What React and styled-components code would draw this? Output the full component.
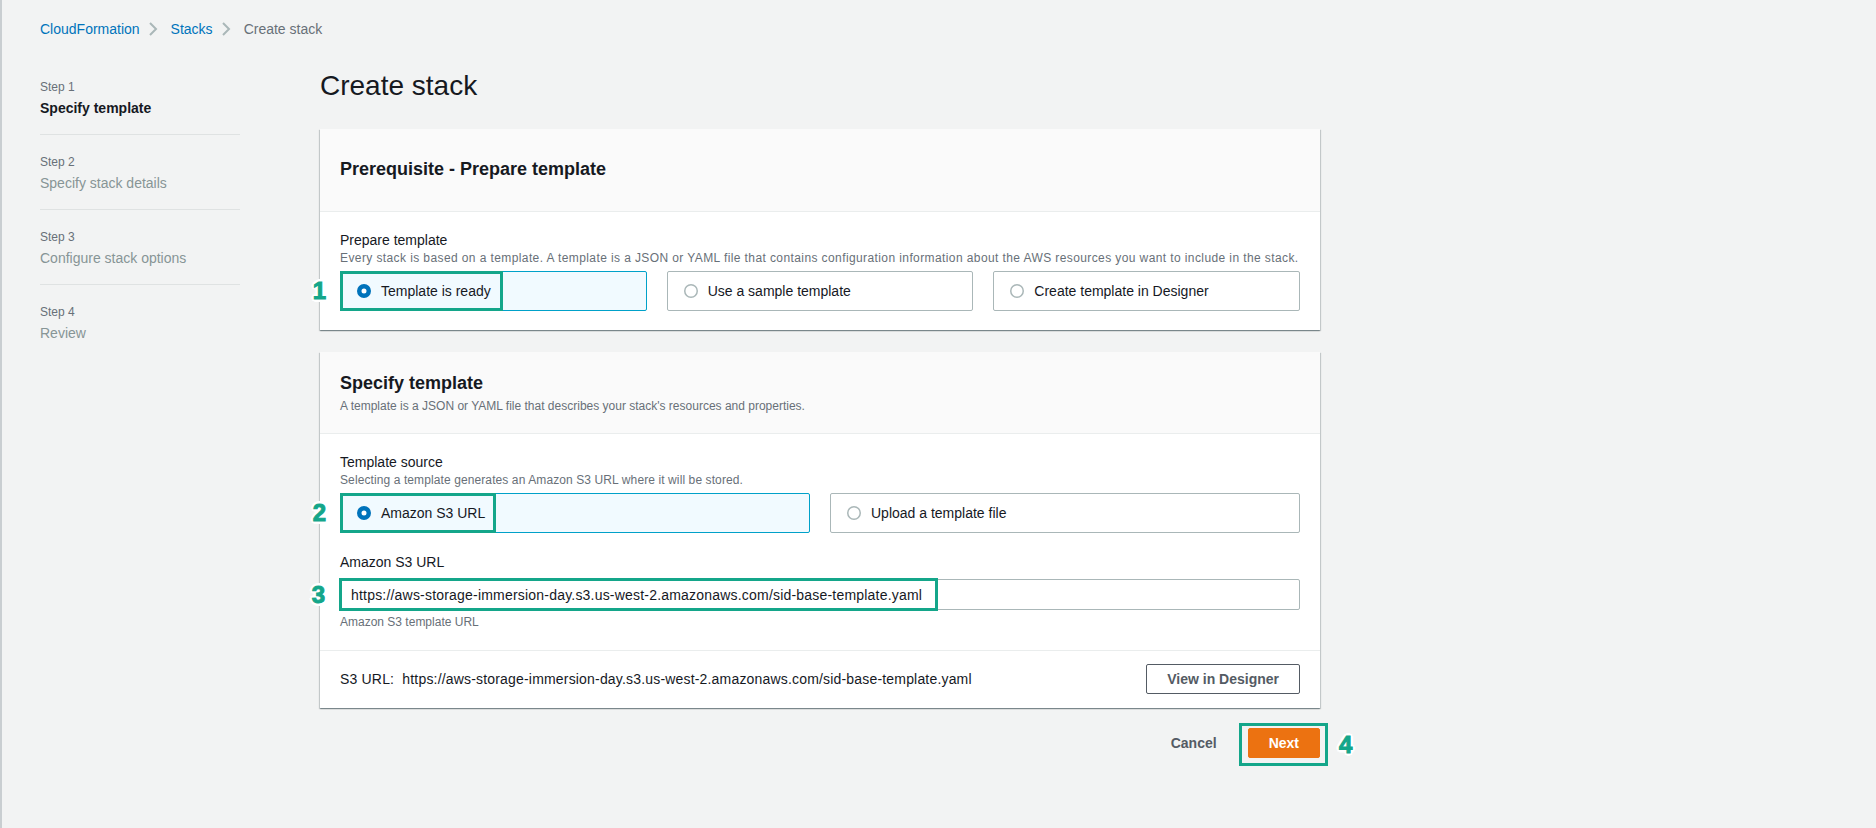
import React from 'react'
import styled, { createGlobalStyle } from 'styled-components';

const GlobalStyle = createGlobalStyle`
  html, body {
    margin: 0;
    padding: 0;
    background: #f2f3f3;
  }
  body {
    font-family: "Liberation Sans", Arial, sans-serif;
    font-size: 14px;
    line-height: 20px;
    color: #16191f;
  }
  * {
    box-sizing: border-box;
  }
`;

const Page = styled.div`
  min-height: 100vh;
  border-left: 2px solid #c9ced1;
  padding: 20px 40px 40px 38px;
`;

const Breadcrumbs = styled.nav`
  display: flex;
  align-items: center;
  height: 18px;
  line-height: 18px;
  font-size: 14px;
`;

const Crumb = styled.a`
  color: ${p => p.$current ? '#687078' : '#0073bb'};
  text-decoration: none;
`;

const Chevron = styled.svg`
  width: 16px;
  height: 16px;
  margin: 0 10px 0 5px;
`;

const Layout = styled.div`
  display: flex;
  align-items: flex-start;
  margin-top: 30px;
`;

const Steps = styled.ol`
  list-style: none;
  margin: 0 80px 0 0;
  padding: 11px 0 0;
  width: 200px;
  flex-shrink: 0;
`;

const Step = styled.li`
  padding: 19px 0 16px;
  border-bottom: 1px solid #dfe2e2;
  &:first-child { padding-top: 0; }
  &:last-child { border-bottom: none; }
`;

const StepNum = styled.div`
  font-size: 12px;
  line-height: 16px;
  color: #687078;
  margin-bottom: 3px;
`;

const StepName = styled.div`
  font-size: 14px;
  line-height: 20px;
  color: ${p => p.$active ? '#16191f' : '#879596'};
  font-weight: ${p => p.$active ? 700 : 400};
`;

const Main = styled.main`
  width: 1000px;
  flex-shrink: 0;
`;

const Title = styled.h1`
  margin: 0 0 25px;
  font-size: 28px;
  line-height: 36px;
  font-weight: 400;
  color: #16191f;
`;

const Card = styled.section`
  background: #fff;
  box-shadow: 0 1px 1px 0 rgba(0, 28, 36, 0.3), 1px 1px 1px 0 rgba(0, 28, 36, 0.15), -1px 1px 1px 0 rgba(0, 28, 36, 0.15);
  & + & { margin-top: 22px; }
`;

const CardHeader = styled.div`
  background: #fafafa;
  border-bottom: 1px solid #eaeded;
  padding: ${p => p.$tall ? '29px 20px 31px' : '20px 20px 19px'};
`;

const CardTitle = styled.h2`
  margin: 0;
  font-size: 18px;
  line-height: 22px;
  font-weight: 700;
`;

const Hint = styled.p`
  margin: ${p => p.$top || 0}px 0 0;
  font-size: 12px;
  line-height: 16px;
  color: #687078;
  letter-spacing: ${p => p.$spread || 0}px;
`;

const CardBody = styled.div`
  padding: 18px 20px ${p => p.$bottom || 19}px;
`;

const Label = styled.div`
  font-size: 14px;
  line-height: 20px;
  margin-top: ${p => p.$top || 0}px;
`;

const Tiles = styled.div`
  display: grid;
  grid-template-columns: repeat(${p => p.$cols}, 1fr);
  gap: 20px;
  margin-top: 5px;
`;

const Tile = styled.label`
  position: relative;
  display: flex;
  align-items: center;
  gap: 10px;
  height: 40px;
  padding: 0 16px;
  border: 1px solid ${p => p.$selected ? '#00a1c9' : '#aab7b8'};
  background: ${p => p.$selected ? '#f1faff' : '#fff'};
  border-radius: 2px;
  font-size: 14px;
`;

const InputWrap = styled.div`
  position: relative;
  margin-top: 7px;
`;

const Input = styled.input`
  display: block;
  width: 100%;
  height: 31px;
  padding: 0 10px;
  border: 1px solid #aab7b8;
  border-radius: 2px;
  font-family: "Liberation Sans", Arial, sans-serif;
  font-size: 14px;
  letter-spacing: 0.2px;
  color: #16191f;
  background: #fff;
  outline: none;
`;

const Footer = styled.div`
  display: flex;
  align-items: center;
  justify-content: space-between;
  border-top: 1px solid #eaeded;
  padding: 13px 20px 14px;
`;

const UrlText = styled.span`
  letter-spacing: 0.18px;
`;

const Button = styled.button`
  height: 30px;
  padding: 0 20px;
  border-radius: 2px;
  border: 1px solid ${p => p.$primary ? '#ec7211' : '#545b64'};
  background: ${p => p.$primary ? '#ec7211' : '#fff'};
  color: ${p => p.$primary ? '#fff' : '#545b64'};
  font-family: "Liberation Sans", Arial, sans-serif;
  font-size: 14px;
  font-weight: 700;
  cursor: pointer;
`;

const LinkButton = styled(Button)`
  border-color: transparent;
  background: transparent;
`;

const Actions = styled.div`
  display: flex;
  justify-content: flex-end;
  align-items: center;
  gap: 10px;
  margin-top: 20px;
`;

const Anchor = styled.span`
  position: relative;
  display: inline-flex;
`;

const Highlight = styled.span`
  position: absolute;
  top: ${p => p.$top ?? -1}px;
  bottom: ${p => p.$bottom ?? -1}px;
  left: ${p => p.$left ?? -1}px;
  ${p => p.$width ? `width: ${p.$width}px;` : `right: ${p.$right ?? -1}px;`}
  border: 3px solid #14a68a;
  pointer-events: none;
`;

const Badge = styled.span`
  position: absolute;
  top: 50%;
  transform: translateY(-50%);
  ${p => p.$right ? 'left: calc(100% + 14px);' : 'right: calc(100% + 17px);'}
  font-family: "Liberation Sans", Arial, sans-serif;
  font-size: 24px;
  font-weight: 700;
  line-height: 1;
  color: #14a68a;
  -webkit-text-stroke: 1px #14a68a;
  text-shadow: -2px -2px 0 #fff, 2px -2px 0 #fff, -2px 2px 0 #fff, 2px 2px 0 #fff,
    0 3px 0 #fff, 0 -3px 0 #fff, 3px 0 0 #fff, -3px 0 0 #fff;
`;

const Radio = ({ checked }) => (
  <svg width="14" height="14" viewBox="0 0 14 14" style={{ flexShrink: 0 }}>
    {checked
      ? <circle cx="7" cy="7" r="4.75" fill="#fff" stroke="#0073bb" strokeWidth="4.5" />
      : <circle cx="7" cy="7" r="6.25" fill="#fff" stroke="#aab7b8" strokeWidth="1.5" />}
  </svg>
);

const Sep = () => (
  <Chevron viewBox="0 0 16 16">
    <path d="M5 2l6 6-6 6" fill="none" stroke="#aab7b8" strokeWidth="2" />
  </Chevron>
);

const steps = ['Specify template', 'Specify stack details', 'Configure stack options', 'Review'];
const url = 'https://aws-storage-immersion-day.s3.us-west-2.amazonaws.com/sid-base-template.yaml';

const App = () => {
  return (
    <>
      <GlobalStyle />
      <Page>
        <Breadcrumbs>
          <Crumb href="#">CloudFormation</Crumb>
          <Sep />
          <Crumb href="#">Stacks</Crumb>
          <Sep />
          <Crumb $current>Create stack</Crumb>
        </Breadcrumbs>
        <Layout>
          <Steps>
            {steps.map((name, i) => (
              <Step key={name}>
                <StepNum>Step {i + 1}</StepNum>
                <StepName $active={i === 0}>{name}</StepName>
              </Step>
            ))}
          </Steps>
          <Main>
            <Title>Create stack</Title>
            <Card>
              <CardHeader $tall>
                <CardTitle>Prerequisite - Prepare template</CardTitle>
              </CardHeader>
              <CardBody>
                <Label>Prepare template</Label>
                <Hint $spread={0.4}>Every stack is based on a template. A template is a JSON or YAML file that contains configuration information about the AWS resources you want to include in the stack.</Hint>
                <Tiles $cols={3}>
                  <Tile $selected>
                    <Radio checked />Template is ready
                    <Highlight $width={163}><Badge>1</Badge></Highlight>
                  </Tile>
                  <Tile><Radio />Use a sample template</Tile>
                  <Tile><Radio />Create template in Designer</Tile>
                </Tiles>
              </CardBody>
            </Card>
            <Card>
              <CardHeader>
                <CardTitle>Specify template</CardTitle>
                <Hint $top={4}>A template is a JSON or YAML file that describes your stack's resources and properties.</Hint>
              </CardHeader>
              <CardBody $bottom={20}>
                <Label>Template source</Label>
                <Hint $spread={0.1}>Selecting a template generates an Amazon S3 URL where it will be stored.</Hint>
                <Tiles $cols={2}>
                  <Tile $selected>
                    <Radio checked />Amazon S3 URL
                    <Highlight $width={156}><Badge>2</Badge></Highlight>
                  </Tile>
                  <Tile><Radio />Upload a template file</Tile>
                </Tiles>
                <Label $top={19}>Amazon S3 URL</Label>
                <InputWrap>
                  <Input readOnly value={url} />
                  <Highlight $width={599}><Badge>3</Badge></Highlight>
                </InputWrap>
                <Hint $top={4}>Amazon S3 template URL</Hint>
              </CardBody>
              <Footer>
                <UrlText>S3 URL:&nbsp; {url}</UrlText>
                <Button>View in Designer</Button>
              </Footer>
            </Card>
            <Actions>
              <LinkButton>Cancel</LinkButton>
              <Anchor>
                <Button $primary>Next</Button>
                <Highlight $top={-5} $bottom={-8} $left={-9} $right={-8}><Badge $right>4</Badge></Highlight>
              </Anchor>
            </Actions>
          </Main>
        </Layout>
      </Page>
    </>
  )
}

export default App;
